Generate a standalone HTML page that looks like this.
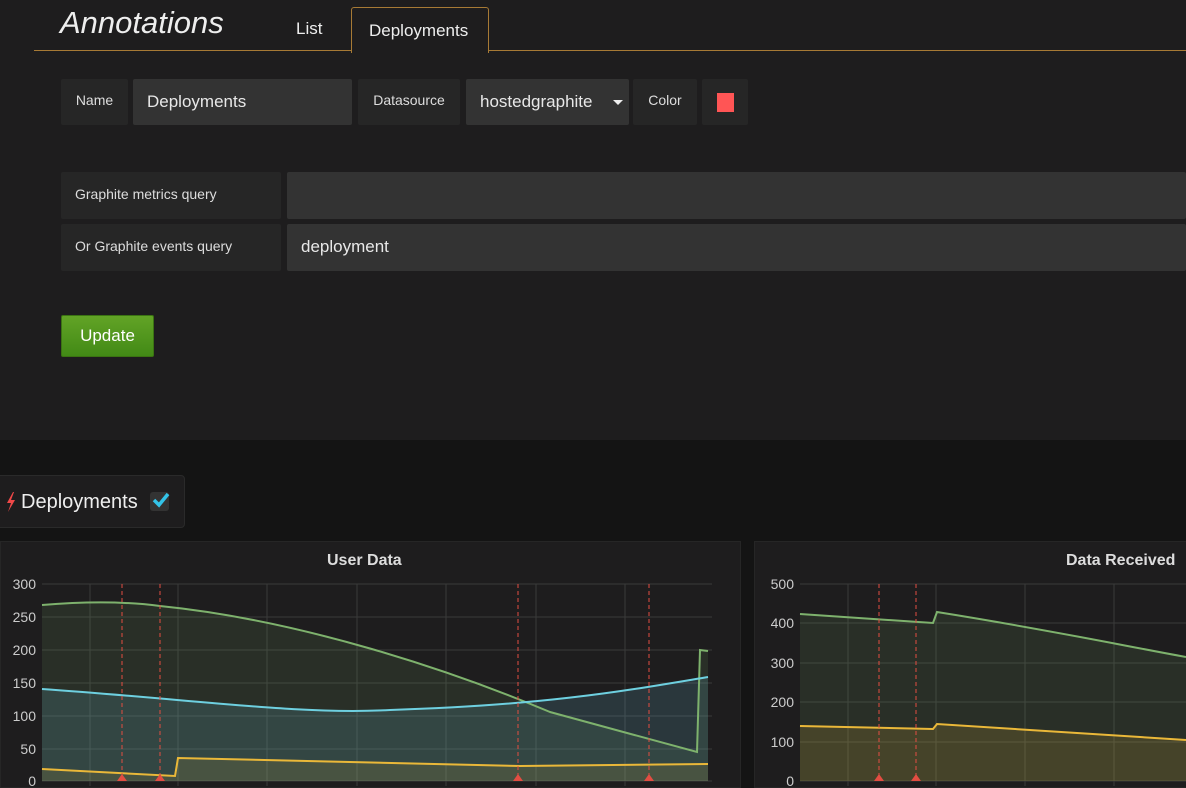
<!DOCTYPE html>
<html><head><style>
body{margin:0;width:1186px;height:786px;overflow:hidden;background:#141414;font-family:"Liberation Sans",sans-serif;color:#e0e0e0;position:relative}
.a{position:absolute}
.top{left:0;top:0;width:1186px;height:440px;background:#1e1d1e}
.lbl{background:#262626;font-size:14px;color:#ddd;display:flex;align-items:center;justify-content:center;border-radius:2px}
.inp{background:#333;font-size:17px;color:#e8e8e8;display:flex;align-items:center;padding-left:14px;box-sizing:border-box;border-radius:2px}
</style></head><body>
<div class="a top"></div>
<div class="a" style="left:60px;top:5px;font-size:31px;font-style:italic;color:#eee">Annotations</div>
<div class="a" style="left:34px;top:50px;width:1152px;height:1px;background:#a77a35"></div>
<div class="a" style="left:296px;top:19px;font-size:17px;color:#eee">List</div>
<div class="a" style="left:351px;top:7px;width:136px;height:45px;background:#1e1d1e;border:1px solid #a77a35;border-bottom:none;border-radius:3px 3px 0 0"></div>
<div class="a" style="left:369px;top:21px;font-size:17px;color:#eee">Deployments</div>

<div class="a lbl" style="left:61px;top:79px;width:67px;height:46px;padding-bottom:4px;box-sizing:border-box">Name</div>
<div class="a inp" style="left:133px;top:79px;width:219px;height:46px">Deployments</div>
<div class="a lbl" style="left:358px;top:79px;width:102px;height:46px;padding-bottom:4px;box-sizing:border-box">Datasource</div>
<div class="a inp" style="left:466px;top:79px;width:163px;height:46px">hostedgraphite</div>
<div class="a" style="left:613px;top:100px;width:0;height:0;border-left:5px solid transparent;border-right:5px solid transparent;border-top:5px solid #eee"></div>
<div class="a lbl" style="left:633px;top:79px;width:64px;height:46px;padding-bottom:4px;box-sizing:border-box">Color</div>
<div class="a lbl" style="left:702px;top:79px;width:46px;height:46px"><div style="width:17px;height:19px;background:#f55"></div></div>

<div class="a lbl" style="left:61px;top:172px;width:220px;height:47px;justify-content:flex-start;padding-left:14px;padding-bottom:4px;box-sizing:border-box">Graphite metrics query</div>
<div class="a inp" style="left:287px;top:172px;width:899px;height:47px"></div>
<div class="a lbl" style="left:61px;top:224px;width:220px;height:47px;justify-content:flex-start;padding-left:14px;padding-bottom:4px;box-sizing:border-box">Or Graphite events query</div>
<div class="a inp" style="left:287px;top:224px;width:899px;height:47px;padding-bottom:2px">deployment</div>

<div class="a" style="left:61px;top:315px;width:93px;height:42px;background:linear-gradient(#62a326,#428a16);border:1px solid #3b7312;box-sizing:border-box;border-radius:2px;color:#fff;font-size:17px;display:flex;align-items:center;justify-content:center">Update</div>

<div class="a" style="left:-4px;top:475px;width:187px;height:51px;background:#1e1d1e;border:1px solid #2a2a2a;border-radius:4px"></div>
<svg class="a" style="left:5px;top:492px" width="12" height="20"><path d="M8 0 L2 11 L6 11 L3 20 L10 8 L6 8 L9 0Z" fill="#f04848"/></svg>
<div class="a" style="left:21px;top:491px;font-size:20px;color:#eee">Deployments</div>
<div class="a" style="left:150px;top:492px;width:19px;height:19px;background:#333;border-radius:3px"></div>
<svg class="a" style="left:151px;top:491px" width="20" height="18"><path d="M3 9 L8 14 L17 3" stroke="#33c3e8" stroke-width="3.5" fill="none"/></svg>

<div class="a" style="left:0;top:541px;width:739px;height:245px;background:#1e1d1e;border:1px solid #262626"></div>
<div class="a" style="left:754px;top:541px;width:432px;height:245px;background:#1e1d1e;border:1px solid #262626"></div>
<div class="a" style="left:327px;top:552px;font-size:16px;font-weight:bold;color:#ddd">User Data</div>
<div class="a" style="left:1066px;top:552px;font-size:16px;font-weight:bold;color:#ddd">Data Received</div>

<svg class="a" style="left:0;top:0" width="1186" height="786">
<g stroke="#3a3a3a" stroke-width="1">
<path d="M42 584H712M42 617H712M42 650H712M42 683H712M42 716H712M42 749H712M42 781H712"/>
<path d="M90 584V786M178 584V786M267 584V786M357 584V786M446 584V786M536 584V786M625 584V786"/>
<path d="M800 584H1186M800 623H1186M800 663H1186M800 702H1186M800 742H1186M800 781H1186"/>
<path d="M848 584V786M936 584V786M1025 584V786M1114 584V786"/>
</g>
<g font-size="14" fill="#ccc" text-anchor="end" font-family="Liberation Sans">
<text x="36" y="589">300</text><text x="36" y="622">250</text><text x="36" y="655">200</text><text x="36" y="688">150</text><text x="36" y="721">100</text><text x="36" y="754">50</text><text x="36" y="786">0</text>
<text x="794" y="589">500</text><text x="794" y="628">400</text><text x="794" y="668">300</text><text x="794" y="707">200</text><text x="794" y="747">100</text><text x="794" y="786">0</text>
</g>
<path d="M42 605 C90 601 130 602 160 606 C300 620 450 670 550 712 L697 752 L700 650 L708 651 L708 781 L42 781Z" fill="rgba(126,178,109,0.12)"/>
<path d="M42 689 C200 700 300 715 390 710 C550 705 630 690 708 677 L708 781 L42 781Z" fill="rgba(100,176,200,0.18)"/>
<path d="M42 769 L175 776 L178 758 L520 766 L708 764 L708 781 L42 781Z" fill="rgba(234,184,57,0.12)"/>
<path d="M42 605 C90 601 130 602 160 606 C300 620 450 670 550 712 L697 752 L700 650 L708 651" stroke="#7eb26d" stroke-width="2" fill="none"/>
<path d="M42 689 C200 700 300 715 390 710 C550 705 630 690 708 677" stroke="#6ed0e0" stroke-width="2" fill="none"/>
<path d="M42 769 L175 776 L178 758 L520 766 L708 764" stroke="#eab839" stroke-width="2" fill="none"/>
<path d="M800 614 L933 623 L937 612 C1050 630 1120 645 1186 657 L1186 781 L800 781Z" fill="rgba(126,178,109,0.12)"/>
<path d="M800 726 L933 729 L937 724 L1186 740 L1186 781 L800 781Z" fill="rgba(234,184,57,0.15)"/>
<path d="M800 614 L933 623 L937 612 C1050 630 1120 645 1186 657" stroke="#7eb26d" stroke-width="2" fill="none"/>
<path d="M800 726 L933 729 L937 724 L1186 740" stroke="#eab839" stroke-width="2" fill="none"/>
<g stroke="#e24d42" stroke-dasharray="4,3" stroke-width="1">
<path d="M122 584V781M160 584V781M518 584V781M649 584V781M879 584V781M916 584V781"/>
</g>
<g fill="#e24d42">
<path d="M117 781l5-7 5 7z"/><path d="M155 781l5-7 5 7z"/><path d="M513 781l5-7 5 7z"/><path d="M644 781l5-7 5 7z"/><path d="M874 781l5-7 5 7z"/><path d="M911 781l5-7 5 7z"/>
</g>
</svg>
</body></html>
